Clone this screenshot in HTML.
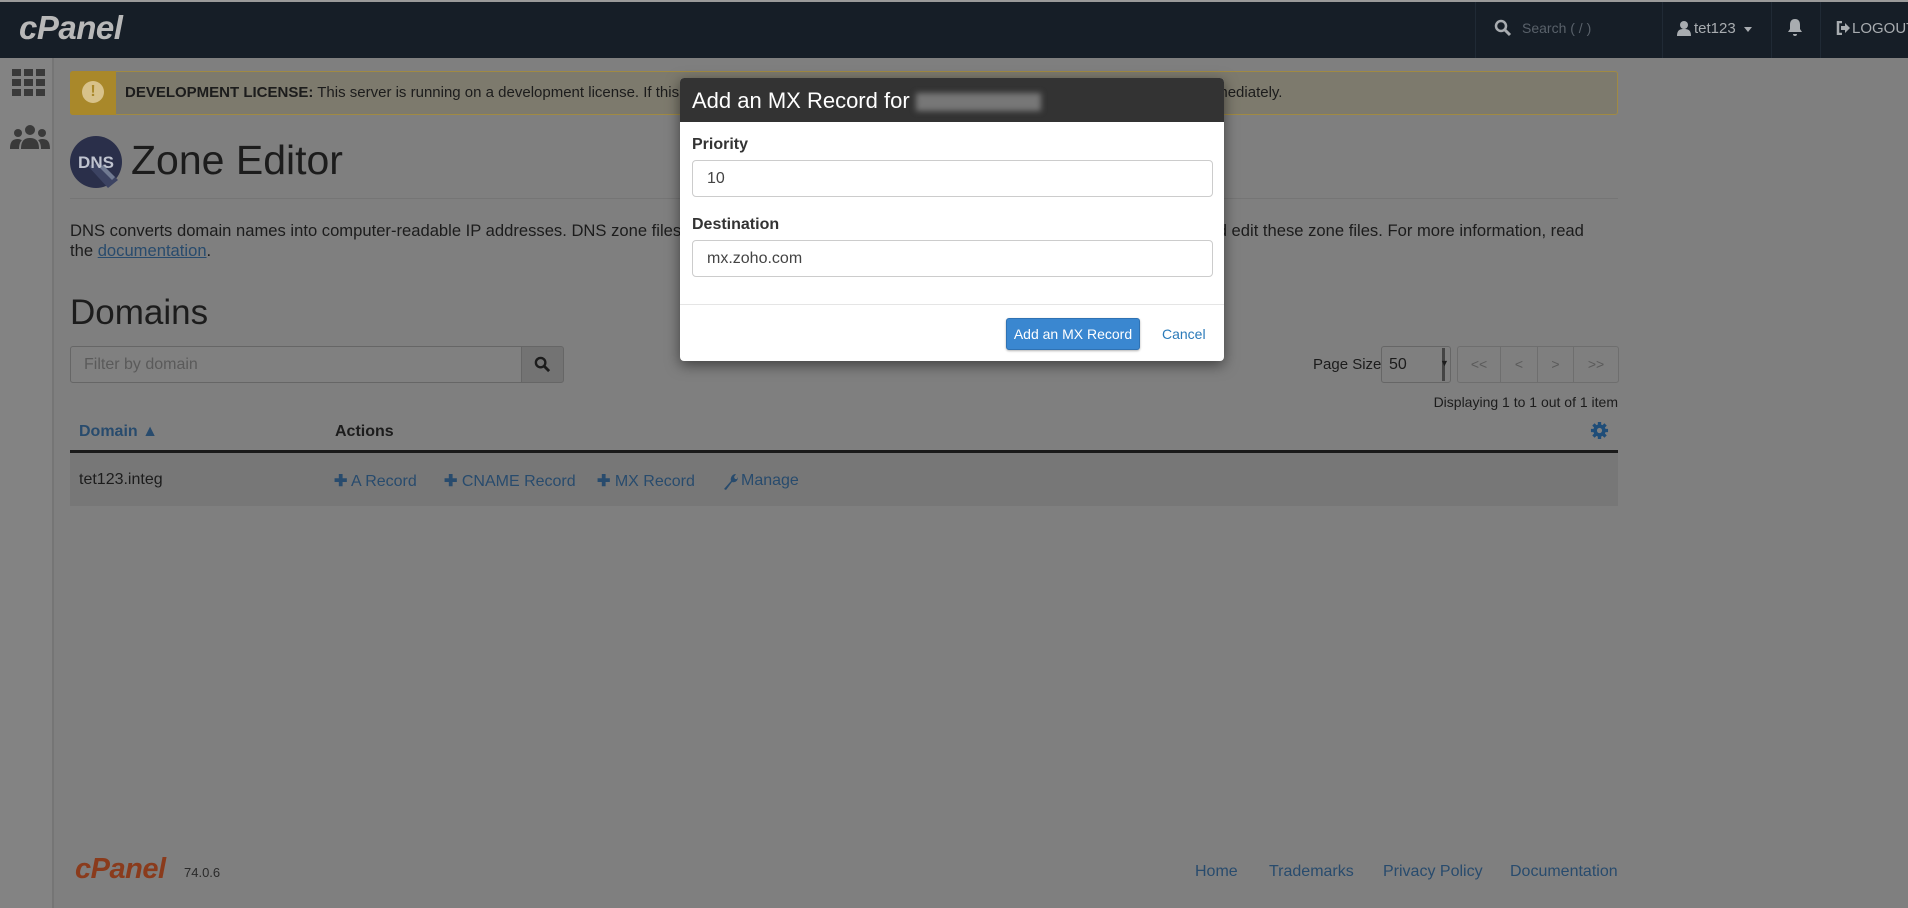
<!DOCTYPE html>
<html><head><meta charset="utf-8">
<style>
*{box-sizing:border-box;margin:0;padding:0}
body{width:1908px;height:908px;overflow:hidden;background:#7f7f7f;font-family:"Liberation Sans",sans-serif;color:#1c1c1c;position:relative}
.abs{position:absolute}
.top{left:0;top:0;width:1908px;height:58px;background:#161e27;border-top:2px solid #9a9a9a}
.sep{top:2px;width:1px;height:56px;background:#202a35}
.side{left:0;top:58px;width:54px;height:850px;background:#838383;border-right:2px solid #757575}
.lnk{color:#284b6d}
.inp{background:#fff;border:1px solid #ccc;border-radius:4px;font-size:16px;color:#444;padding-left:14px;display:flex;align-items:center}
</style></head><body>
<div class="abs top"></div>
<div class="abs" style="left:19px;top:9px;font-size:33px;font-weight:bold;font-style:italic;color:#b8b8b8;letter-spacing:-0.5px">cPanel</div>
<div class="abs sep" style="left:1475px"></div>
<div class="abs sep" style="left:1662px"></div>
<div class="abs sep" style="left:1771px"></div>
<div class="abs sep" style="left:1820px"></div>
<svg class="abs" style="left:1494px;top:19px" width="18" height="18" viewBox="0 0 18 18"><circle cx="7" cy="7" r="5" stroke="#a8acb0" stroke-width="2.5" fill="none"/><path d="M11 11l5 5" stroke="#a8acb0" stroke-width="3"/></svg>
<div class="abs" style="left:1522px;top:20px;font-size:14px;color:#59616a">Search ( / )</div>
<svg class="abs" style="left:1677px;top:20px" width="14" height="16" viewBox="0 0 14 16"><circle cx="7" cy="5" r="4" fill="#a8acb0"/><path d="M0 16c0-6 3-7 7-7s7 1 7 7z" fill="#a8acb0"/></svg>
<div class="abs" style="left:1694px;top:20px;font-size:15px;color:#a8acb0">tet123</div>
<div class="abs" style="left:1744px;top:27px;border:4px solid transparent;border-top:5px solid #a8acb0"></div>
<svg class="abs" style="left:1787px;top:18px" width="16" height="20" viewBox="0 0 16 20"><path d="M8 1c-4 0-5 3-5 6v4l-2 3h14l-2-3V7c0-3-1-6-5-6z M6 16h4a2 2 0 0 1-4 0z" fill="#a8acb0"/></svg>
<svg class="abs" style="left:1836px;top:21px" width="14" height="14" viewBox="0 0 14 14"><path d="M6 1H2v12h4" stroke="#a8acb0" stroke-width="2.5" fill="none"/><path d="M5 5h4V2l5 5-5 5V9H5z" fill="#a8acb0"/></svg>
<div class="abs" style="left:1852px;top:20px;font-size:15px;color:#a8acb0">LOGOUT</div>

<div class="abs side"></div>
<svg class="abs" style="left:12px;top:69px" width="33" height="28" viewBox="0 0 33 28"><g fill="#3a3a3a"><rect x="0" y="0" width="9" height="7"/><rect x="12" y="0" width="9" height="7"/><rect x="24" y="0" width="9" height="7"/><rect x="0" y="10" width="9" height="7"/><rect x="12" y="10" width="9" height="7"/><rect x="24" y="10" width="9" height="7"/><rect x="0" y="20" width="9" height="7"/><rect x="12" y="20" width="9" height="7"/><rect x="24" y="20" width="9" height="7"/></g></svg>
<svg class="abs" style="left:10px;top:125px" width="40" height="24" viewBox="0 0 40 24"><g fill="#3a3a3a"><circle cx="20" cy="5" r="5"/><circle cx="8" cy="8" r="4"/><circle cx="32" cy="8" r="4"/><path d="M11 24c0-9 4-11 9-11s9 2 9 11z"/><path d="M0 24c0-8 3-10 8-10 2 0 3 1 4 1-2 2-3 5-3 9z"/><path d="M40 24c0-8-3-10-8-10-2 0-3 1-4 1 2 2 3 5 3 9z"/></g></svg>

<div class="abs" style="left:70px;top:71px;width:1548px;height:44px;background:#7d7a6d;border:1px solid #a08a43;border-radius:3px"></div>
<div class="abs" style="left:70px;top:71px;width:46px;height:44px;background:#a9882a;border-radius:3px 0 0 3px"></div>
<div class="abs" style="left:82px;top:81px;width:22px;height:22px;border-radius:50%;background:#d8c28a;color:#a9882a;font-weight:bold;font-size:16px;text-align:center;line-height:22px">!</div>
<div class="abs" style="left:125px;top:84px;font-size:15px;color:#1c1c1c;white-space:nowrap"><b>DEVELOPMENT LICENSE:</b> This server is running on a development license. If this server is being used in a production environment, notify your hosting provider immediately.</div>

<svg class="abs" style="left:70px;top:136px" width="53" height="53" viewBox="0 0 53 53"><circle cx="26" cy="26" r="26" fill="#2a2f4a"/><path d="M18 30l20 22 10-8-18-18z" fill="#3c4362"/><text x="26" y="32" font-family="Liberation Sans" font-weight="bold" font-size="17" fill="#bfc3cf" text-anchor="middle">DNS</text><path d="M30 32l12 12 3-3-12-12z" fill="#707a92"/></svg>
<div class="abs" style="left:131px;top:137px;font-size:41px;color:#1c1c1c">Zone Editor</div>
<div class="abs" style="left:70px;top:198px;width:1548px;height:1px;background:#757575"></div>
<div class="abs" style="left:70px;top:221px;width:1570px;font-size:16.6px;line-height:20px;color:#1c1c1c">DNS converts domain names into computer-readable IP addresses. DNS zone files configure the domain’s internet settings. Use this interface to manage and edit these zone files. For more information, read<br>the <span class="lnk" style="text-decoration:underline">documentation</span>.</div>
<div class="abs" style="left:70px;top:293px;font-size:35px;color:#1c1c1c">Domains</div>
<div class="abs" style="left:70px;top:346px;width:452px;height:37px;background:#808080;border:1px solid #666;border-radius:3px 0 0 3px;font-size:16px;color:#5a5a5a;padding:9px 13px">Filter by domain</div>
<div class="abs" style="left:521px;top:346px;width:43px;height:37px;background:#737373;border:1px solid #666;border-radius:0 3px 3px 0"></div>
<svg class="abs" style="left:534px;top:356px" width="17" height="17" viewBox="0 0 18 18"><circle cx="7" cy="7" r="5" stroke="#1c1c1c" stroke-width="2.5" fill="none"/><path d="M11 11l5 5" stroke="#1c1c1c" stroke-width="3"/></svg>
<div class="abs" style="left:1313px;top:356px;font-size:15px">Page Size</div>
<div class="abs" style="left:1381px;top:346px;width:70px;height:37px;border:1px solid #666;border-radius:3px;font-size:16px;padding:9px 7px">50</div>
<div class="abs" style="left:1442px;top:348px;width:3px;height:33px;background:#444"></div>
<div class="abs" style="left:1440px;top:358px;font-size:9px">▼</div>
<div class="abs" style="left:1457px;top:346px;width:162px;height:37px;border:1px solid #6e6e6e;border-radius:3px;display:flex;font-size:14px;color:#5a5a5a">
<div style="width:43px;text-align:center;line-height:35px;border-right:1px solid #6e6e6e">&lt;&lt;</div><div style="width:37px;text-align:center;line-height:35px;border-right:1px solid #6e6e6e">&lt;</div><div style="width:36px;text-align:center;line-height:35px;border-right:1px solid #6e6e6e">&gt;</div><div style="flex:1;text-align:center;line-height:35px">&gt;&gt;</div></div>
<div class="abs" style="left:1300px;width:318px;text-align:right;top:394px;font-size:14px">Displaying 1 to 1 out of 1 item</div>
<svg class="abs" style="left:1590px;top:421px" width="19" height="19" viewBox="0 0 20 20"><g fill="#1f4d78"><circle cx="10" cy="10" r="6.5"/><g stroke="#1f4d78" stroke-width="3.5"><path d="M10 1v18M1 10h18M3.6 3.6l12.8 12.8M16.4 3.6L3.6 16.4"/></g></g><circle cx="10" cy="10" r="2.7" fill="#808080"/></svg>
<div class="abs" style="left:79px;top:423px;font-size:16px;font-weight:bold;color:#284b6d">Domain ▲</div>
<div class="abs" style="left:335px;top:423px;font-size:16px;font-weight:bold">Actions</div>
<div class="abs" style="left:70px;top:450px;width:1548px;height:3px;background:#1a1a1a"></div>
<div class="abs" style="left:70px;top:453px;width:1548px;height:53px;background:#777"></div>
<div class="abs" style="left:79px;top:471px;font-size:16px">tet123.integ</div>
<div class="abs lnk" style="left:334px;top:471px;font-size:16px;white-space:nowrap"><b>✚</b> A Record</div>
<div class="abs lnk" style="left:444px;top:471px;font-size:16px;white-space:nowrap"><b>✚</b> CNAME Record</div>
<div class="abs lnk" style="left:597px;top:471px;font-size:16px;white-space:nowrap"><b>✚</b> MX Record</div>
<svg class="abs" style="left:722px;top:473px" width="16" height="17" viewBox="0 0 16 17"><path d="M2 16l7-8c-1-3 1-7 5-7l-2 3 1 2 2 0 1-2c0 4-3 6-6 5l-6 8z" fill="#284b6d"/></svg>
<div class="abs lnk" style="left:741px;top:472px;font-size:16px;white-space:nowrap">Manage</div>

<div class="abs" style="left:75px;top:853px;font-size:29px;font-weight:bold;font-style:italic;color:#8a3b1c;letter-spacing:-0.5px">cPanel</div>
<div class="abs" style="left:184px;top:865px;font-size:13px;color:#2a2a2a">74.0.6</div>
<div class="abs lnk" style="left:1195px;top:863px;font-size:16px">Home</div>
<div class="abs lnk" style="left:1269px;top:863px;font-size:16px">Trademarks</div>
<div class="abs lnk" style="left:1383px;top:863px;font-size:16px">Privacy Policy</div>
<div class="abs lnk" style="left:1510px;top:863px;font-size:16px">Documentation</div>

<div class="abs" style="left:680px;top:78px;width:544px;height:283px;background:#fff;border-radius:4px;box-shadow:0 4px 14px rgba(0,0,0,.5);overflow:hidden">
<div style="height:44px;background:#333;color:#fff;font-size:22px;padding:10px 12px;white-space:nowrap">Add an MX Record for <span style="display:inline-block;width:125px;height:18px;background:#777;filter:blur(3px);vertical-align:middle"></span></div>
<div class="abs" style="left:12px;top:58px;font-size:16px;font-weight:bold;color:#333">Priority</div>
<div class="abs inp" style="left:12px;top:82px;width:521px;height:37px">10</div>
<div class="abs" style="left:12px;top:138px;font-size:16px;font-weight:bold;color:#333">Destination</div>
<div class="abs inp" style="left:12px;top:162px;width:521px;height:37px">mx.zoho.com</div>
<div class="abs" style="left:0;top:226px;width:544px;height:1px;background:#e5e5e5"></div>
<div class="abs" style="left:326px;top:240px;width:134px;height:32px;background:#3a87d0;border:1px solid #2f72b3;border-radius:3px;color:#fff;font-size:14px;text-align:center;line-height:30px;box-shadow:0 1px 2px rgba(0,0,0,.3)">Add an MX Record</div>
<div class="abs" style="left:482px;top:248px;font-size:14px;color:#2a7ab9">Cancel</div>
</div>
</body></html>
